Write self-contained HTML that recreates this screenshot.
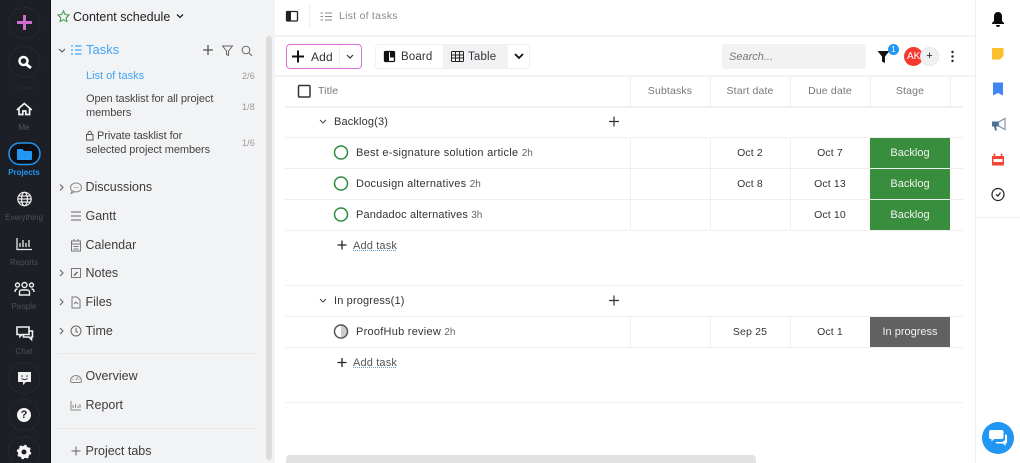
<!DOCTYPE html>
<html><head><meta charset="utf-8"><style>
*{box-sizing:border-box}
html,body{margin:0;padding:0;width:1020px;height:463px;overflow:hidden;background:#fff;font-family:"Liberation Sans",sans-serif}
.a{position:absolute}
.t{position:absolute;white-space:nowrap;line-height:16px;font-size:12px;letter-spacing:.15px;color:#444}
.c{text-align:center;transform:translateX(-50%)}
.h{position:absolute;height:1px;background:#efefef}
.v{position:absolute;width:1px;background:#efefef}
.n{color:#4e5156;font-size:8px;letter-spacing:0;transform:translateX(-50%)}
.s{font-size:12.500px;letter-spacing:0;color:#3d3d3d}
.stage{position:absolute;left:870px;width:80px;color:#f2f2f2;font-size:11px;text-align:center;line-height:30px}
svg{position:absolute;overflow:visible;fill:none}
</style></head><body>
<!-- dark rail -->
<div class="a" style="left:0;top:0;width:50px;height:463px;background:#1c1f25"></div>
<div class="a" style="left:50px;top:0;width:1px;height:463px;background:#0d0d0d"></div>
<svg style="left:0;top:0" width="50" height="463">
<g stroke="#34373d" stroke-dasharray="1 1.500" fill="none">
<circle cx="24.500" cy="23" r="15.500"/><circle cx="24.500" cy="62" r="15.500"/>
<circle cx="24" cy="378" r="15.500"/><circle cx="24" cy="415" r="15.500"/><circle cx="24" cy="452" r="15.500"/>
<path d="M14 88h23"/></g>
<path d="M24.500 15v15M17 22.500h15" stroke="#d26bd0" stroke-width="3"/>
<circle cx="23.500" cy="61" r="4" stroke="#fff" stroke-width="2.500"/><path d="M26.500 64.500l4.500 3.500" stroke="#fff" stroke-width="3"/>
<path d="M16.800 110l7.500-6.500 7.500 6.500M19 108.500v6h3.800v-3.500h3v3.500h3.800v-6" stroke="#f0f0f0" stroke-width="1.700"/>
<rect x="9" y="143" width="31" height="21.500" rx="10.700" fill="#0c0f14" stroke="#2196f3" stroke-width="1.500"/>
<path d="M17 150a1 1 0 0 1 1-1h4.500l1.500 2h7a1 1 0 0 1 1 1v7a1 1 0 0 1-1 1H18a1 1 0 0 1-1-1z" fill="#2196f3"/>
<g stroke="#eee" stroke-width="1.200"><circle cx="24.500" cy="199" r="6.700"/><ellipse cx="24.500" cy="199" rx="3" ry="6.700"/><path d="M18 199h13M19 196h11M19 202h11"/></g>
<path d="M17 238v11.500h15M20 247v-4M23 247v-7M26 247v-4M29 247v-7" stroke="#e8e8e8" stroke-width="1.300"/>
<g stroke="#eee" stroke-width="1.400"><circle cx="24.500" cy="285" r="2.500"/><circle cx="17.500" cy="285" r="2"/><circle cx="31.500" cy="285" r="2"/><path d="M19.500 295v-3a2 2 0 0 1 2-2h6a2 2 0 0 1 2 2v3zM15 292c0-2 .7-3 2.500-3M34 292c0-2-.7-3-2.500-3"/></g>
<path d="M17 327h12v7.500h-7l-2 2v-2h-3zM29 331h3.500v6h-1v2.500l-2.500-2.500h-5.500v-2" stroke="#f0f0f0" stroke-width="1.600"/>
<path d="M18 372h13v10h-5l-3 3v-3h-5z" fill="#f0f0f0"/><circle cx="22" cy="376" r=".8" fill="#333"/><circle cx="27" cy="376" r=".8" fill="#333"/><path d="M21.500 378.500q3 2 6 0" stroke="#333"/>
<circle cx="24" cy="415" r="7" fill="#f5f5f5"/>
<circle cx="24" cy="452" r="4.300" stroke="#f5f5f5" stroke-width="3.600"/><circle cx="24" cy="452" r="6.300" stroke="#f5f5f5" stroke-width="1.800" stroke-dasharray="2.500 2.450"/>
</svg>
<div class="t" style="left:24px;top:120px;color:#55585d;font-size:8px;letter-spacing:0;transform:translateX(-50%)">Me</div>
<div class="t" style="left:24px;top:164.500px;color:#2196f3;font-size:8px;letter-spacing:0;font-weight:bold;transform:translateX(-50%)">Projects</div>
<div class="t n" style="left:24px;top:209.500px">Everything</div>
<div class="t n" style="left:24px;top:254.500px">Reports</div>
<div class="t n" style="left:24px;top:299px">People</div>
<div class="t n" style="left:24px;top:344px">Chat</div>
<div class="t" style="left:24px;top:407px;color:#1c1f25;font-size:11px;font-weight:bold;letter-spacing:0;transform:translateX(-50%)">?</div>

<!-- secondary sidebar -->
<div class="a" style="left:51px;top:0;width:224px;height:463px;background:#f2f3f5"></div>
<div class="a" style="left:266px;top:36px;width:6px;height:424px;border-radius:3px;background:#dcdcdc"></div>
<div class="h" style="left:57px;top:353px;width:200px;background:#e8e8e8"></div>
<div class="h" style="left:57px;top:428px;width:200px;background:#e8e8e8"></div>
<svg style="left:0;top:0" width="275" height="463">
<path d="M63.500 11l1.700 3.500 3.800.5-2.800 2.700.7 3.800-3.400-1.800-3.400 1.800.7-3.800-2.800-2.700 3.800-.5z" stroke="#4a9a50" stroke-width="1.100"/>
<path d="M177 14.500l3 3 3-3" stroke="#222" stroke-width="1.300"/>
<path d="M59 49l3 3 3-3" stroke="#555" stroke-width="1.100"/>
<path d="M75 46h6.500M75 50h6.500M75 54h6.500M71 46h2M71 50h2M71 54h2" stroke="#42a5f5" stroke-width="1.300"/>
<path d="M208 45v10M203 50h10" stroke="#555" stroke-width="1.300"/>
<path d="M222.500 46h10l-4 5v4.500l-2-1v-3.500z" stroke="#666" stroke-width="1"/>
<circle cx="246" cy="50" r="3.800" stroke="#666" stroke-width="1"/><path d="M249 53l3 3" stroke="#666" stroke-width="1"/>
<rect x="86.500" y="134.500" width="6.500" height="5.500" stroke="#555" stroke-width="1"/><path d="M88 134.500v-1.500a1.700 1.700 0 0 1 3.400 0v1.500" stroke="#555"/>
<g stroke="#666" stroke-width="1">
<path d="M60 184.500l3 3-3 3M60 270l3 3-3 3M60 299l3 3-3 3M60 328l3 3-3 3" stroke-width="1.100"/>
<ellipse cx="76" cy="187.500" rx="5.500" ry="4.500" stroke="#888"/><path d="M72 191l-1 2.500 3-1.300M74 187.500h.8M75.700 187.500h.8M77.400 187.500h.8" stroke="#888"/>
<path d="M71 212h10M71 216h10M71 220h10" stroke-width="1.100"/>
<path d="M71.500 241h9v10h-9zM71.500 244h9M74 239v2M78 239v2M73.500 246.500h5M73.500 249h5" stroke="#777"/>
<rect x="71.500" y="268.500" width="9" height="9" stroke="#777"/><path d="M74 275.500l3.500-3.500" stroke-width="1.500"/>
<path d="M72 297h5l3 3v8h-8zM74 304l2-2 2 2" stroke="#777"/>
<circle cx="76" cy="331" r="5"/><path d="M76 328v3.500l2 1"/>
<path d="M70.500 381a5.500 5.500 0 0 1 11 0 1.500 1.500 0 0 1-1.500 1.500h-8a1.500 1.500 0 0 1-1.500-1.500zM76 380l2-3M72.500 379.500h1M78.500 379.500h1" stroke="#888"/>
<path d="M71 401v9h10M73 408v-3M75.500 408v-4M78 408v-2.500M80 408v-4" stroke="#888"/>
<path d="M76 446.500v9M71.500 451h9"/>
</g>
</svg>
<div class="t" style="left:73px;top:9px;font-size:12.500px;letter-spacing:0;color:#222">Content schedule</div>
<div class="t" style="left:86px;top:42px;font-size:13px;letter-spacing:0;color:#42a5f5">Tasks</div>
<div class="t" style="left:86px;top:68px;color:#42a5f5;font-size:11px;letter-spacing:0">List of tasks</div>
<div class="t" style="left:86px;top:92px;font-size:11px;line-height:14px;letter-spacing:-.08px">Open tasklist for all project<br>members</div>
<div class="t" style="left:97px;top:129px;font-size:11px;line-height:14px;letter-spacing:-.08px">Private tasklist for</div>
<div class="t" style="left:86px;top:143px;font-size:11px;line-height:14px;letter-spacing:-.08px">selected project members</div>
<div class="t" style="left:242px;top:68px;font-size:9px;color:#999">2/6</div>
<div class="t" style="left:242px;top:99px;font-size:9px;color:#999">1/8</div>
<div class="t" style="left:242px;top:135px;font-size:9px;color:#999">1/6</div>
<div class="t s" style="left:85.500px;top:179px">Discussions</div>
<div class="t s" style="left:85.500px;top:208px">Gantt</div>
<div class="t s" style="left:85.500px;top:237px">Calendar</div>
<div class="t s" style="left:85.500px;top:265px">Notes</div>
<div class="t s" style="left:85.500px;top:294px">Files</div>
<div class="t s" style="left:85.500px;top:323px">Time</div>
<div class="t s" style="left:85.500px;top:368px">Overview</div>
<div class="t s" style="left:85.500px;top:397px">Report</div>
<div class="t s" style="left:85.500px;top:443px">Project tabs</div>

<!-- top bar -->
<div class="v" style="left:309px;top:4px;height:24px"></div>
<div class="a" style="left:275px;top:35px;width:700px;height:2px;background:#f3f3f3"></div>
<div class="a" style="left:275px;top:75px;width:700px;height:1.500px;background:#f3f3f3"></div>
<div class="a" style="left:286px;top:44px;width:76px;height:25px;border:1px solid #d673d4;border-radius:4px;background:#fff"></div>
<div class="a" style="left:339px;top:45px;width:1px;height:23px;background:#eee"></div>
<div class="a" style="left:375px;top:44px;width:155px;height:25px;border:1px solid #f0f0f0;border-radius:4px"></div>
<div class="a" style="left:443px;top:45px;width:65px;height:23px;background:#f1f2f4"></div>
<svg style="left:275px;top:0" width="700" height="80">
<rect x="11.500" y="11.500" width="11" height="9.500" rx="1" stroke="#222" stroke-width="1.300"/><path d="M12 12h4v9h-4z" fill="#222"/>
<path d="M50 13h7M50 16.500h7M50 20h7M45.500 13h2.500M45.500 16.500h2.500M45.500 20h2.500" stroke="#888" stroke-width="1"/>
<path d="M17 56.500h12M23 50.500v12" stroke="#111" stroke-width="2"/>
<path d="M72 55l3 3 3-3" stroke="#333" stroke-width="1.200"/>
<rect x="109.500" y="51.500" width="10" height="10" rx="1" stroke="#111" stroke-width="1.300"/><path d="M109.500 51.500h4.500v10h-4.500zM115 51.500h4v6h-4z" fill="#111"/>
<g stroke="#222" stroke-width="1"><rect x="176.500" y="51.500" width="12" height="10" rx="1"/><path d="M176.500 55h12M176.500 58h12M180.500 51.500v10M184.500 51.500v10"/></g>
<path d="M240 54l4 4 4-4" stroke="#111" stroke-width="1.800"/>
<path d="M602.500 51h12l-4.500 5.500v6.500l-3-1.500v-5z" fill="#111"/>
<circle cx="677.500" cy="52" r="1.200" fill="#222"/><circle cx="677.500" cy="56.500" r="1.200" fill="#222"/><circle cx="677.500" cy="61" r="1.200" fill="#222"/>
</svg>
<div class="t" style="left:339px;top:8px;font-size:10.500px;color:#8b8b8b;letter-spacing:.25px">List of tasks</div>
<div class="t" style="left:311px;top:48.500px;font-size:12px;color:#333">Add</div>
<div class="t" style="left:401px;top:49px;font-size:11.500px;color:#333">Board</div>
<div class="t" style="left:468px;top:49px;font-size:11.500px;color:#333">Table</div>
<div class="a" style="left:722px;top:44px;width:144px;height:25px;background:#f2f2f2;border-radius:3px"></div>
<div class="t" style="left:729px;top:48.500px;font-size:11px;letter-spacing:0;font-style:italic;color:#777">Search...</div>
<div class="a" style="left:888px;top:44px;width:11px;height:11px;border-radius:50%;background:#2196f3;color:#fff;font-size:8px;line-height:11px;text-align:center">1</div>
<div class="a" style="left:904px;top:47px;width:19px;height:19px;border-radius:50%;background:#f33a30;color:#fff;font-size:10px;line-height:19px;padding-left:3px;overflow:hidden;white-space:nowrap">AK</div>
<div class="a" style="left:920px;top:47px;width:19px;height:19px;border-radius:50%;background:#eff0f2;border:1px solid #e8e8e8;color:#222;font-size:11px;line-height:17px;text-align:center">+</div>

<!-- table -->
<div class="a" style="left:285px;top:106px;width:678px;height:1.500px;background:#f0f0f0"></div>
<div class="h" style="left:285px;top:137px;width:678px"></div>
<div class="h" style="left:285px;top:168px;width:678px"></div>
<div class="h" style="left:285px;top:199px;width:678px"></div>
<div class="h" style="left:285px;top:230px;width:678px"></div>
<div class="h" style="left:285px;top:285px;width:678px"></div>
<div class="h" style="left:285px;top:316px;width:678px"></div>
<div class="h" style="left:285px;top:347px;width:678px"></div>
<div class="h" style="left:285px;top:402px;width:678px"></div>
<div class="v" style="left:630px;top:76px;height:30px"></div><div class="v" style="left:710px;top:76px;height:30px"></div><div class="v" style="left:790px;top:76px;height:30px"></div><div class="v" style="left:870px;top:76px;height:30px"></div><div class="v" style="left:950px;top:76px;height:30px"></div>
<div class="v" style="left:630px;top:137px;height:93px"></div><div class="v" style="left:710px;top:137px;height:93px"></div><div class="v" style="left:790px;top:137px;height:93px"></div>
<div class="v" style="left:630px;top:316px;height:31px"></div><div class="v" style="left:710px;top:316px;height:31px"></div><div class="v" style="left:790px;top:316px;height:31px"></div>
<svg style="left:0;top:0" width="1020" height="463">
<rect x="298.500" y="85.500" width="11.500" height="11.500" rx="1" stroke="#333" stroke-width="1.500"/>
<path d="M320 120l3 3 3-3M320 299l3 3 3-3" stroke="#444" stroke-width="1"/>
<path d="M614 116.500v10M609 121.500h10M614 295.500v10M609 300.500h10" stroke="#333" stroke-width="1.200"/>
<g stroke="#2e8b3c" stroke-width="1.500"><circle cx="341" cy="152.500" r="6.500"/><circle cx="341" cy="183.500" r="6.500"/><circle cx="341" cy="214.500" r="6.500"/></g>
<path d="M341 325a6.500 6.500 0 0 1 0 13z" fill="#ccc"/><circle cx="341" cy="331.500" r="6.500" stroke="#555" stroke-width="1.500"/>
<path d="M342 240.500v9M337.500 245h9M342 358v9M337.500 362.500h9" stroke="#222" stroke-width="1.300"/>
</svg>
<div class="t" style="left:318px;top:83px;font-size:10.500px;color:#777">Title</div>
<div class="t c" style="left:670px;top:83px;font-size:10.500px;color:#777">Subtasks</div>
<div class="t c" style="left:750px;top:83px;font-size:10.500px;color:#777">Start date</div>
<div class="t c" style="left:830px;top:83px;font-size:10.500px;color:#777">Due date</div>
<div class="t c" style="left:910px;top:83px;font-size:10.500px;color:#777">Stage</div>
<div class="t" style="left:334px;top:114px;font-size:11px;color:#333">Backlog(3)</div>
<div class="t" style="left:334px;top:293px;font-size:11px;color:#333">In progress(1)</div>
<div class="t" style="left:356px;top:145px;font-size:11px;letter-spacing:.27px;color:#333">Best e-signature solution article <span style="font-size:10px;letter-spacing:0;color:#666">2h</span></div>
<div class="t" style="left:356px;top:176px;font-size:11px;letter-spacing:.25px;color:#333">Docusign alternatives <span style="font-size:10px;letter-spacing:0;color:#666">2h</span></div>
<div class="t" style="left:356px;top:207px;font-size:11px;letter-spacing:.15px;color:#333">Pandadoc alternatives <span style="font-size:10px;letter-spacing:0;color:#666">3h</span></div>
<div class="t" style="left:356px;top:324px;font-size:11px;letter-spacing:.25px;color:#333">ProofHub review <span style="font-size:10px;letter-spacing:0;color:#666">2h</span></div>
<div class="t" style="left:353px;top:238px;font-size:11px;color:#555;text-decoration:underline dotted #6a9ed0">Add task</div>
<div class="t" style="left:353px;top:355px;font-size:11px;color:#555;text-decoration:underline dotted #6a9ed0">Add task</div>
<div class="t c" style="left:750px;top:145px;font-size:10.500px;color:#333">Oct 2</div>
<div class="t c" style="left:830px;top:145px;font-size:10.500px;color:#333">Oct 7</div>
<div class="t c" style="left:750px;top:176px;font-size:10.500px;color:#333">Oct 8</div>
<div class="t c" style="left:830px;top:176px;font-size:10.500px;color:#333">Oct 13</div>
<div class="t c" style="left:830px;top:207px;font-size:10.500px;color:#333">Oct 10</div>
<div class="t c" style="left:750px;top:324px;font-size:10.500px;color:#333">Sep 25</div>
<div class="t c" style="left:830px;top:324px;font-size:10.500px;color:#333">Oct 1</div>
<div class="stage" style="top:137.500px;height:30px;background:#388e3c">Backlog</div>
<div class="stage" style="top:168.500px;height:30px;background:#388e3c">Backlog</div>
<div class="stage" style="top:199.500px;height:30px;background:#388e3c">Backlog</div>
<div class="stage" style="top:316.500px;height:30px;background:#616161">In progress</div>
<div class="a" style="left:286px;top:455px;width:470px;height:8px;border-radius:4px 4px 0 0;background:#e2e2e2"></div>

<!-- right rail -->
<div class="v" style="left:975px;top:0;height:463px;background:#eee"></div>
<div class="h" style="left:976px;top:217px;width:44px"></div>
<svg style="left:975px;top:0" width="45" height="463">
<path d="M23 12a4 4 0 0 0-4 4v5l-2 2v1h12v-1l-2-2v-5a4 4 0 0 0-4-4z" fill="#0a0a0a"/><path d="M21 25h4a2 2 0 0 1-4 0z" fill="#0a0a0a"/>
<path d="M17 48h11.500v8l-3.500 3.500H17z" fill="#fbc02d"/>
<path d="M18 82.500h10v13l-5-2.500-5 2.500z" fill="#3f86f4"/>
<path d="M23.500 122l6.500-3.500v11l-6.500-3.500z" stroke="#8a9dae" stroke-width="1.300"/><path d="M17 121.500h6.500v5H17z" fill="#4a7199"/><path d="M19 126.500l1 4h2l-1-4z" fill="#4a7199"/>
<path d="M17 156h12v9.500H17z" fill="#f14538"/><path d="M19.500 153.500v3M26.500 153.500v3" stroke="#f14538" stroke-width="1.500"/><path d="M18.500 159h9v3h-9z" fill="#fff"/>
<circle cx="23" cy="194.500" r="6" stroke="#222" stroke-width="1.200"/><path d="M21 194.500l2 1.500 2.500-3.500" stroke="#222" stroke-width="1.200"/>
<circle cx="23" cy="438" r="16" fill="#2196f3"/>
<path d="M14 432a2 2 0 0 1 2-2h10.500a2 2 0 0 1 2 2v5a2 2 0 0 1-2 2h-7.500l-2.500 2.500V439h-.5a2 2 0 0 1-2-2z" fill="#fff"/>
<path d="M30 434.500h.5a1.500 1.500 0 0 1 1.500 1.500v6a1.500 1.500 0 0 1-1.500 1.500v2.500l-2.500-2.500h-6a1 1 0 0 1-1-1.500h5.500a3.500 3.500 0 0 0 3.500-3.500z" fill="#fff"/>
</svg>
</body></html>
